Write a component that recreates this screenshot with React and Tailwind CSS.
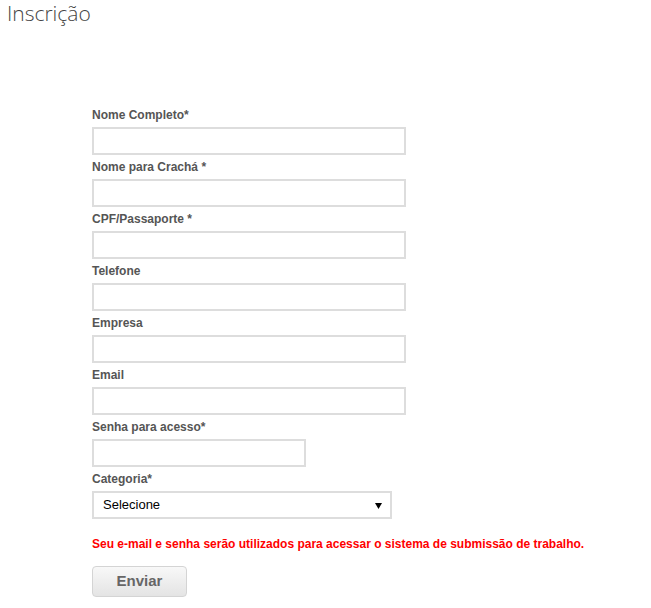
export default function App() {
  const fields = [
    { label: "Nome Completo*", w: "w-[314px]" },
    { label: "Nome para Crachá *", w: "w-[314px]" },
    { label: "CPF/Passaporte *", w: "w-[314px]" },
    { label: "Telefone", w: "w-[314px]" },
    { label: "Empresa", w: "w-[314px]" },
    { label: "Email", w: "w-[314px]" },
    { label: "Senha para acesso*", w: "w-[214px]" },
  ];
  return (
    <div className="min-h-[608px] w-full bg-white" style={{ fontFamily: '"Liberation Sans", Arial, sans-serif' }}>
      <h1 className="h-[28px] pl-[7px] text-[21px] leading-[26px] font-light text-[#444]" style={{ fontFamily: '"Open Sans", sans-serif' }}>
        Inscrição
      </h1>
      <div className="pl-[92px] pt-[75px]">
        {fields.map((f) => (
          <div key={f.label}>
            <div className="pt-[4px] pb-[3px] text-[12px] leading-[17px] font-bold text-[#555]">{f.label}</div>
            <div className={`${f.w} h-[28px] border-2 border-[#ddd] bg-white`} />
          </div>
        ))}
        <div className="pt-[4px] pb-[3px] text-[12px] leading-[17px] font-bold text-[#555]">Categoria*</div>
        <div className="flex h-[28px] w-[300px] items-center justify-between border-2 border-[#ddd] bg-white pl-[9px] pr-[8px]">
          <span className="text-[13px] text-black">Selecione</span>
          <svg width="7" height="7" viewBox="0 0 7 7"><path d="M0 1h7L3.5 7z" fill="#000" /></svg>
        </div>
        <div className="pt-[17px] text-[12px] leading-[17px] font-bold text-[#ff0000]">
          Seu e-mail e senha serão utilizados para acessar o sistema de submissão de trabalho.
        </div>
        <button className="mt-[13px] flex h-[31px] w-[95px] items-center justify-center rounded-[4px] border border-[#d4d4d4] bg-gradient-to-b from-[#f8f8f8] to-[#e4e4e4] text-[15px] font-bold text-[#666]">
          Enviar
        </button>
      </div>
    </div>
  );
}
